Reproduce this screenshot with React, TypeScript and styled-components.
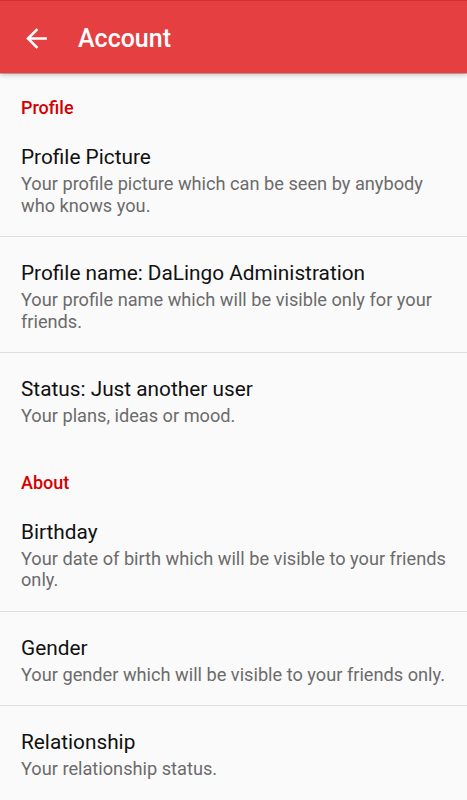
import React from 'react';
import styled, {createGlobalStyle} from 'styled-components';

const COLORS = {
    primary: '#e53f42',
    primaryDark: '#d32f2f',
    accent: '#d50000',
    background: '#fafafa',
    divider: '#dedede',
    title: '#111111',
    summary: '#6b6b6b',
    white: '#ffffff',
};

type Pref = {title: string; summary: string};
type Section = {title: string; items: Pref[]};

const sections: Section[] = [
    {
        title: 'Profile',
        items: [
            {title: 'Profile Picture', summary: 'Your profile picture which can be seen by anybody who knows you.'},
            {title: 'Profile name: DaLingo Administration', summary: 'Your profile name which will be visible only for your friends.'},
            {title: 'Status: Just another user', summary: 'Your plans, ideas or mood.'},
        ],
    },
    {
        title: 'About',
        items: [
            {title: 'Birthday', summary: 'Your date of birth which will be visible to your friends only.'},
            {title: 'Gender', summary: 'Your gender which will be visible to your friends only.'},
            {title: 'Relationship', summary: 'Your relationship status.'},
        ],
    },
];


const GlobalStyle = createGlobalStyle`
  html, body {
    margin: 0;
    padding: 0;
    background: ${COLORS.background};
    font-family: Roboto, "Noto Sans", "Liberation Sans", sans-serif;
    -webkit-font-smoothing: antialiased;
  }
`;

const BackIcon = () => (
    <svg width="31" height="31" viewBox="0 0 24 24" fill={COLORS.white}>
        <path d="M20 11H7.83l5.59-5.59L12 4l-8 8 8 8 1.41-1.41L7.83 13H20v-2z"/>
    </svg>
);

export default function App() {
    return (
        <Screen>
            <GlobalStyle/>
            <Toolbar>
                <BackButton aria-label="Back">
                    <BackIcon/>
                </BackButton>
                <ToolbarTitle>Account</ToolbarTitle>
            </Toolbar>

            <List>
                {sections.map(section => (
                    <React.Fragment key={section.title}>
                        <Category>{section.title}</Category>
                        {section.items.map((item, key) => (
                            <Preference key={item.title} last={key === section.items.length - 1}>
                                <PrefTitle>{item.title}</PrefTitle>
                                <PrefSummary>{item.summary}</PrefSummary>
                            </Preference>
                        ))}
                    </React.Fragment>
                ))}
            </List>
        </Screen>
    );
}


const Screen = styled.div`
  width: 467px;
  min-height: 800px;
  background: ${COLORS.background};
  overflow: hidden;
`;

const Toolbar = styled.header`
  position: relative;
  z-index: 1;
  height: 72px;
  display: flex;
  align-items: center;
  background: ${COLORS.primary};
  border-top: 1px solid ${COLORS.primaryDark};
  box-shadow: 0 1px 0 rgba(160, 30, 30, 0.35), 0 2px 5px rgba(0, 0, 0, 0.22);
`;

const BackButton = styled.div`
  width: 31px;
  height: 31px;
  margin-left: 21px;
  margin-top: 3px;
  display: flex;
`;

const ToolbarTitle = styled.h1`
  margin: 4px 0 0 26px;
  color: ${COLORS.white};
  font-size: 25px;
  font-weight: 500;
  line-height: 30px;
`;

const List = styled.div`
  display: flex;
  flex-direction: column;
`;

const Category = styled.div`
  height: 48px;
  box-sizing: border-box;
  padding: 24px 21px 0;
  color: ${COLORS.accent};
  font-size: 18px;
  font-weight: 500;
  line-height: 22px;
`;

const Preference = styled.div<{last?: boolean}>`
  padding: 23px 21px 20px;
  border-bottom: 1px solid ${COLORS.divider};
  ${p => p.last ? 'border-bottom: none; padding-bottom: 21px;' : ''}
`;

const PrefTitle = styled.div`
  color: ${COLORS.title};
  font-size: 20.8px;
  line-height: 26px;
  white-space: nowrap;
`;

const PrefSummary = styled.div`
  margin-top: 3px;
  color: ${COLORS.summary};
  font-size: 18.2px;
  line-height: 21.5px;
`;
